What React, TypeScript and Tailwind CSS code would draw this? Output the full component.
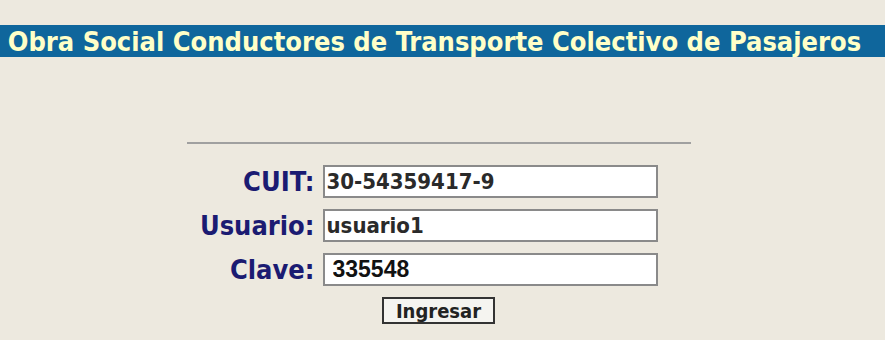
export default function App() {
  return (
    <div className="min-h-[340px] w-full bg-[#ede9df] pt-[25px] font-['DejaVu_Sans',sans-serif] font-stretch-condensed">
      <header className="flex h-[32px] items-center justify-center bg-[#0f669c] pr-[16px]">
        <h1 className="whitespace-nowrap text-[27px] font-bold leading-none text-[#ffffc8]">
          Obra Social Conductores de Transporte Colectivo de Pasajeros
        </h1>
      </header>
      <div className="mt-[85px] flex justify-center pr-[8px]">
        <div className="w-[504px]">
          <hr className="border-t-2 border-[#a0a0a0]" />
          <form className="mt-[21px] grid grid-cols-[136px_1fr] gap-y-[11px]">
            <label className="pr-[8px] text-right text-[27px] font-bold leading-[33px] text-[#1b1b72]">CUIT:</label>
            <input
              defaultValue="30-54359417-9"
              className="h-[33px] w-[335px] border-2 border-[#8a8a8a] bg-white px-[2px] text-[22px] font-bold text-[#2a2a2a] outline-none"
            />
            <label className="pr-[8px] text-right text-[27px] font-bold leading-[33px] text-[#1b1b72]">Usuario:</label>
            <input
              defaultValue="usuario1"
              className="h-[33px] w-[335px] border-2 border-[#8a8a8a] bg-white px-[2px] text-[22px] font-bold text-[#2a2a2a] outline-none"
            />
            <label className="pr-[8px] text-right text-[27px] font-bold leading-[33px] text-[#1b1b72]">Clave:</label>
            <input
              defaultValue="335548"
              className="h-[33px] w-[335px] border-2 border-[#8a8a8a] bg-white px-[8px] font-['Liberation_Sans',sans-serif] text-[23px] font-bold text-[#111] outline-none"
            />
            <div className="col-span-2 flex justify-center">
              <button
                type="button"
                className="h-[27px] w-[113px] border-2 border-[#333] bg-[#f5f4f0] text-[20px] font-bold leading-none text-[#222]"
              >
                Ingresar
              </button>
            </div>
          </form>
        </div>
      </div>
    </div>
  );
}
